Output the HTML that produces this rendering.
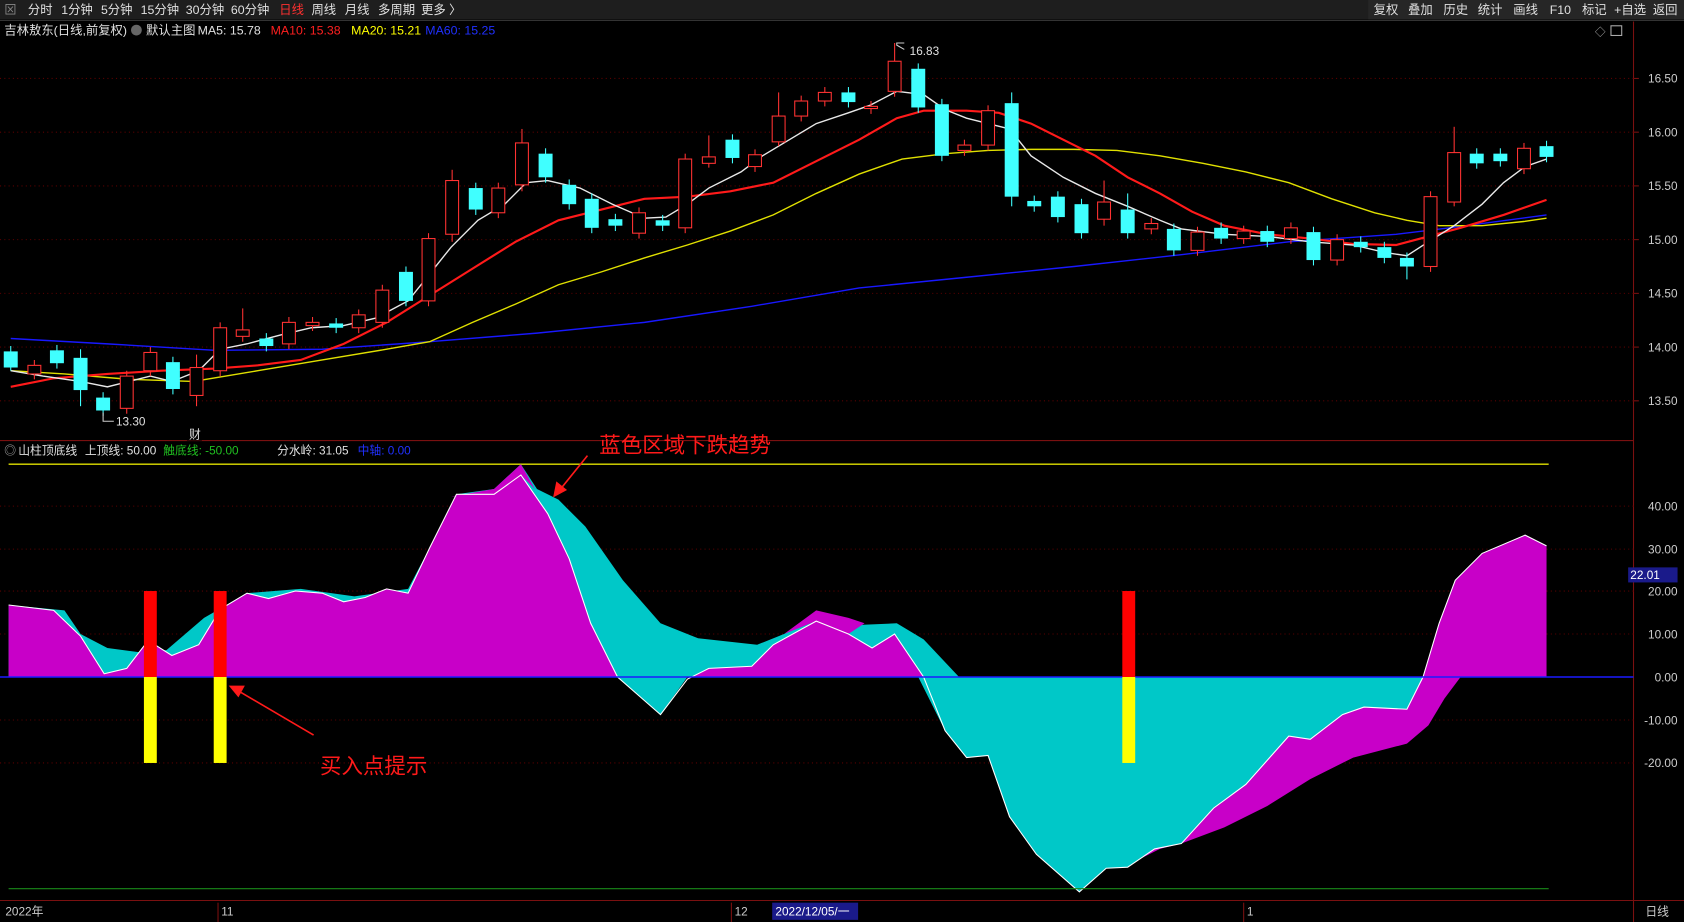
<!DOCTYPE html>
<html><head><meta charset="utf-8"><style>
html,body{margin:0;padding:0;background:#000;overflow:hidden}
svg{display:block}
text{font-family:"Liberation Sans","Noto Sans CJK SC",sans-serif}
</style></head><body>
<svg id="s" width="1684" height="922" viewBox="0 0 1568 858" preserveAspectRatio="none" xmlns="http://www.w3.org/2000/svg">
<rect width="1568" height="858" fill="#000"/>
<!-- top bar -->
<rect x="0" y="0" width="1568" height="18" fill="#1e1e1e"/>
<g font-size="11.5" fill="#e0e0e0">
<text x="4" y="13" fill="#888">⊠</text>
<text x="26" y="13">分时</text><text x="57" y="13">1分钟</text><text x="94" y="13">5分钟</text><text x="131" y="13">15分钟</text><text x="173" y="13">30分钟</text><text x="215" y="13">60分钟</text>
<text x="260" y="13" fill="#ff3030">日线</text><text x="290" y="13">周线</text><text x="321" y="13">月线</text><text x="352" y="13">多周期</text><text x="392" y="13">更多 〉</text>
</g>
<g font-size="11.5" fill="#e0e0e0">
<rect x="1274" y="0" width="294" height="18" fill="#262626"/>
<text x="1279" y="13">复权</text><text x="1311" y="13">叠加</text><text x="1344" y="13">历史</text><text x="1376" y="13">统计</text><text x="1409" y="13">画线</text><text x="1443" y="13">F10</text><text x="1473" y="13">标记</text><text x="1503" y="13">+自选</text><text x="1539" y="13">返回</text>
</g>
<line x1="0" y1="19" x2="1568" y2="19" fill="none" stroke="#333"/>
<g font-size="11.5">
<text x="4" y="32" fill="#e0e0e0">吉林敖东(日线,前复权)</text>
<circle cx="127" cy="28" r="5" fill="#666"/>
<text x="136" y="32" fill="#e0e0e0">默认主图</text>
<text x="184" y="32" fill="#e0e0e0">MA5: 15.78</text>
<text x="252" y="32" fill="#ff2020">MA10: 15.38</text>
<text x="327" y="32" fill="#ffff00">MA20: 15.21</text>
<text x="396" y="32" fill="#2030ff">MA60: 15.25</text>
<text x="1485" y="33" fill="#aaa" font-size="10">◇</text>
<rect x="1500" y="24" width="10" height="9" fill="none" stroke="#aaa"/>
</g>
<!-- frame -->
<line x1="1521" y1="20" x2="1521" y2="858" stroke="#7a1010"/>
<line x1="0" y1="410" x2="1521" y2="410" stroke="#7a1010"/>
<line x1="0" y1="838" x2="1568" y2="838" stroke="#7a1010"/>
<!-- grid -->
<g stroke="#5a0000" stroke-dasharray="1,3">
<line x1="0" y1="73" x2="1521" y2="73"/><line x1="0" y1="123" x2="1521" y2="123"/><line x1="0" y1="173" x2="1521" y2="173"/><line x1="0" y1="223" x2="1521" y2="223"/><line x1="0" y1="273" x2="1521" y2="273"/><line x1="0" y1="323" x2="1521" y2="323"/><line x1="0" y1="373" x2="1521" y2="373"/>
<line x1="0" y1="471" x2="1521" y2="471"/><line x1="0" y1="511" x2="1521" y2="511"/><line x1="0" y1="550" x2="1521" y2="550"/><line x1="0" y1="590" x2="1521" y2="590"/><line x1="0" y1="670" x2="1521" y2="670"/><line x1="0" y1="710" x2="1521" y2="710"/>
</g>
<g font-size="11" fill="#ccc" text-anchor="end">
<text x="1562" y="77">16.50</text><text x="1562" y="127">16.00</text><text x="1562" y="177">15.50</text><text x="1562" y="227">15.00</text><text x="1562" y="277">14.50</text><text x="1562" y="327">14.00</text><text x="1562" y="377">13.50</text>
<text x="1562" y="475">40.00</text><text x="1562" y="515">30.00</text><text x="1562" y="554">20.00</text><text x="1562" y="594">10.00</text><text x="1562" y="634">0.00</text><text x="1562" y="674">-10.00</text><text x="1562" y="714">-20.00</text>
</g>
<g stroke="#7a1010"><line x1="1521" y1="73" x2="1526" y2="73"/><line x1="1521" y1="123" x2="1526" y2="123"/><line x1="1521" y1="173" x2="1526" y2="173"/><line x1="1521" y1="223" x2="1526" y2="223"/><line x1="1521" y1="273" x2="1526" y2="273"/><line x1="1521" y1="323" x2="1526" y2="323"/><line x1="1521" y1="373" x2="1526" y2="373"/></g>
<rect x="1516" y="528" width="46" height="14" fill="#1a1a8a"/>
<text x="1518" y="539" font-size="11" fill="#fff">22.01</text>

<!-- MA lines -->
<g fill="none" stroke-width="1.3">
<polyline stroke="#1818ff" points="10,315 100,320 200,326 300,325 400,318 500,310 600,300 700,285 800,268 900,258 1000,248 1100,237 1200,225 1300,218 1350,212 1440,200"/>
<polyline stroke="#e0e000" points="10,345 60,348 120,353 180,355 240,345 300,335 360,325 400,318 440,300 480,283 520,265 560,253 600,240 640,228 680,215 720,200 760,180 800,162 840,148 880,143 920,140 960,139 1000,139 1040,140 1080,145 1120,152 1160,160 1200,170 1240,185 1280,198 1310,205 1340,210 1380,210 1420,206 1440,203"/>
<polyline stroke="#ff1a1a" stroke-width="2" points="10,360 50,352 100,348 150,345 200,343 240,340 280,335 320,320 360,300 400,275 440,250 480,225 520,205 560,195 600,185 640,183 680,178 720,170 760,150 800,130 835,110 860,103 900,103 930,105 960,115 990,130 1020,145 1050,165 1080,180 1110,197 1140,210 1180,218 1220,222 1260,227 1300,228 1330,220 1360,212 1400,200 1440,186"/>
<polyline stroke="#e8e8e8" points="10,345 40,350 75,355 100,360 140,350 160,355 185,345 205,325 230,320 260,312 290,305 320,303 350,296 380,280 400,255 420,230 445,205 470,190 490,170 510,168 540,175 570,190 600,203 620,202 640,190 660,175 690,160 710,145 735,130 760,115 790,105 810,98 835,85 860,88 880,102 900,110 920,115 940,120 960,145 990,165 1020,180 1050,192 1080,205 1100,213 1140,218 1180,220 1220,225 1260,228 1290,235 1310,238 1330,225 1354,210 1380,190 1400,170 1420,155 1440,148"/>
</g>
<g id="candles"></g>
<g font-size="11" fill="#e0e0e0">
<text x="847" y="51">16.83</text><polyline points="842,46 835,42 835,40 842,40" fill="none" stroke="#ccc"/>
<text x="108" y="396">13.30</text><polyline points="96,384 96,392 106,392" fill="none" stroke="#ccc"/>
<rect x="174" y="397" width="14" height="13" fill="#000"/><text x="176" y="408" fill="#ddd">财</text>
</g>

<!-- lower panel -->
<g font-size="11">
<text x="4" y="423" fill="#aaa">◎</text>
<text x="17" y="423" fill="#e0e0e0">山柱顶底线</text>
<text x="79" y="423" fill="#e0e0e0">上顶线: 50.00</text>
<text x="152" y="423" fill="#20c020">触底线: -50.00</text>
<text x="258" y="423" fill="#e0e0e0">分水岭: 31.05</text>
<text x="333" y="423" fill="#2030ff">中轴: 0.00</text>
</g>
<line x1="8" y1="432" x2="1442" y2="432" stroke="#e0e000" stroke-width="1.3"/>
<defs>
<clipPath id="pos"><rect x="0" y="400" width="1521" height="230"/></clipPath>
<clipPath id="neg"><rect x="0" y="630" width="1521" height="220"/></clipPath>
</defs>
<polygon fill="#00c8c8" points="8,630 8,563 60,568 75,590 100,603 130,607 155,605 190,575 230,552 280,548 330,555 380,548 400,510 425,460 460,455 485,432 500,455 520,465 545,490 580,540 615,580 650,594 705,600 730,590 760,577 790,582 835,580 860,595 893,630"/>
<g clip-path="url(#pos)">
<polygon fill="#c800c8" points="8,630 8,563 50,568 75,592 97,627 118,622 138,596 160,610 185,600 205,567 230,552 250,557 275,550 300,552 320,560 340,556 360,548 380,552 400,510 425,460 460,460 485,442 510,478 530,520 550,580 575,630 615,665 640,632 660,622 700,620 720,600 760,578 790,590 812,603 833,590 860,630 1325,630 1340,580 1355,540 1380,515 1420,498 1440,508 1440,630"/>
</g>
<polygon fill="#c800c8" points="420,462 460,455 485,432 498,455 485,442 460,460"/>
<polygon fill="#c800c8" points="730,590 760,568 790,575 805,580 790,590 760,578"/>
<g clip-path="url(#neg)">
<polygon fill="#00c8c8" points="560,630 575,630 615,665 640,630 855,630 880,680 900,705 920,703 940,760 965,795 1005,830 1030,808 1050,807 1075,790 1100,785 1130,752 1160,730 1200,685 1220,688 1250,665 1270,658 1310,660 1325,630"/>
</g>
<polygon fill="#c800c8" points="1060,800 1075,790 1100,785 1130,752 1160,730 1200,685 1220,688 1250,665 1270,658 1310,660 1325,630 1360,630 1345,650 1330,675 1310,692 1260,705 1220,725 1180,750 1140,770 1100,785 1080,790"/>
<polyline fill="none" stroke="#fff" stroke-width="1" points="8,563 50,568 75,592 97,627 118,622 138,596 160,610 185,600 205,567 230,552 250,557 275,550 300,552 320,560 340,556 360,548 380,552 400,510 425,460 460,460 485,442 510,478 530,520 550,580 575,630 615,665 640,632 660,622 700,620 720,600 760,578 790,590 812,603 833,590 860,630 880,680 900,705 920,703 940,760 965,795 1005,830 1030,808 1050,807 1075,790 1100,785 1130,752 1160,730 1200,685 1220,688 1250,665 1270,658 1310,660 1325,630 1340,580 1355,540 1380,515 1420,498 1440,508"/>
<line x1="0" y1="630" x2="1521" y2="630" stroke="#1a1aff" stroke-width="1.3"/>
<line x1="8" y1="827" x2="1442" y2="827" stroke="#1a8a1a"/>
<g>
<rect x="134" y="550" width="12" height="80" fill="#ff0000"/><rect x="134" y="630" width="12" height="80" fill="#ffff00"/>
<rect x="199" y="550" width="12" height="80" fill="#ff0000"/><rect x="199" y="630" width="12" height="80" fill="#ffff00"/>
<rect x="1045" y="550" width="12" height="80" fill="#ff0000"/><rect x="1045" y="630" width="12" height="80" fill="#ffff00"/>
</g>
<!-- annotations -->
<g fill="#ff1a1a" stroke="#ff1a1a">
<text x="558" y="421" font-size="20" stroke="none">蓝色区域下跌趋势</text>
<line x1="547" y1="424" x2="522" y2="455" stroke-width="1.5"/>
<polygon points="515,463 518,448 528,456" stroke="none"/>
<text x="298" y="720" font-size="20" stroke="none">买入点提示</text>
<line x1="292" y1="684" x2="222" y2="643" stroke-width="1.5"/>
<polygon points="213,638 228,638 222,649" stroke="none"/>
</g>
<!-- time axis -->
<g font-size="11" fill="#ccc">
<text x="5" y="852">2022年</text>
<line x1="203" y1="840" x2="203" y2="858" stroke="#7a1010"/><text x="206" y="852">11</text>
<line x1="681" y1="840" x2="681" y2="858" stroke="#7a1010"/><text x="684" y="852">12</text>
<rect x="719" y="840" width="80" height="16" fill="#1a1a8a"/><text x="722" y="852" fill="#fff">2022/12/05/一</text>
<line x1="1158" y1="840" x2="1158" y2="858" stroke="#7a1010"/><text x="1161" y="852">1</text>
<text x="1532" y="852">日线</text>
</g>
</svg>
<script>
var d=[[10,'c',327,342,322,345],[32,'r',340,348],[53,'c',326,338],[75,'c',333,363,325,378],[96,'c',370,382],[118,'r',350,380],[140,'r',328,345],[161,'c',337,362],[183,'r',342,368,330,378],[205,'r',305,345],[226,'r',307,313,287,318],[248,'c',315,322],[269,'r',300,320],[291,'r',300,303],[313,'c',301,305],[334,'r',293,305],[356,'r',270,300],[378,'c',253,280],[399,'r',222,280],[421,'r',168,218,158,225],[443,'c',175,195],[464,'r',175,198],[486,'r',133,172,120,178],[508,'c',143,165],[530,'c',172,190],[551,'c',185,212],[573,'c',204,210],[595,'r',198,217],[617,'c',205,210],[638,'r',148,212],[660,'r',146,152,126,156],[682,'c',130,147],[703,'r',144,155],[725,'r',108,132,86,136],[746,'r',94,108],[768,'r',86,94],[790,'c',86,95],[811,'r',99,101],[833,'r',57,85,40,90],[855,'c',64,100],[877,'c',97,145],[898,'r',135,140],[920,'r',103,135],[942,'c',96,183,86,192],[963,'c',187,192],[985,'c',183,202],[1007,'c',190,217],[1028,'r',188,204,168,210],[1050,'c',195,217,180,222],[1072,'r',208,213],[1093,'c',213,233],[1115,'r',216,233],[1137,'c',212,222],[1158,'r',215,222],[1180,'c',215,225],[1202,'r',212,222],[1223,'c',216,242],[1245,'r',223,242],[1267,'c',225,230],[1289,'c',230,240],[1310,'c',240,248,235,260],[1332,'r',183,248],[1354,'r',142,188,118,192],[1375,'c',143,152],[1397,'c',143,150],[1419,'r',138,157],[1440,'c',136,146]];
var g=document.getElementById('candles'),h='';
d.forEach(function(c){var x=c[0],t=c[2],b=c[3],hi=c[4]||t-5,lo=c[5]||b+5;var col=c[1]=='r'?'#ff3232':'#40ffff';
h+='<line x1="'+x+'" y1="'+hi+'" x2="'+x+'" y2="'+lo+'" stroke="'+col+'"/>';
if(c[1]=='r')h+='<rect x="'+(x-6)+'" y="'+t+'" width="12" height="'+Math.max(1,b-t)+'" fill="#000" stroke="'+col+'"/>';
else h+='<rect x="'+(x-6.5)+'" y="'+t+'" width="13" height="'+Math.max(1,b-t)+'" fill="'+col+'"/>';});
g.innerHTML=h;
</script>
</body></html>
